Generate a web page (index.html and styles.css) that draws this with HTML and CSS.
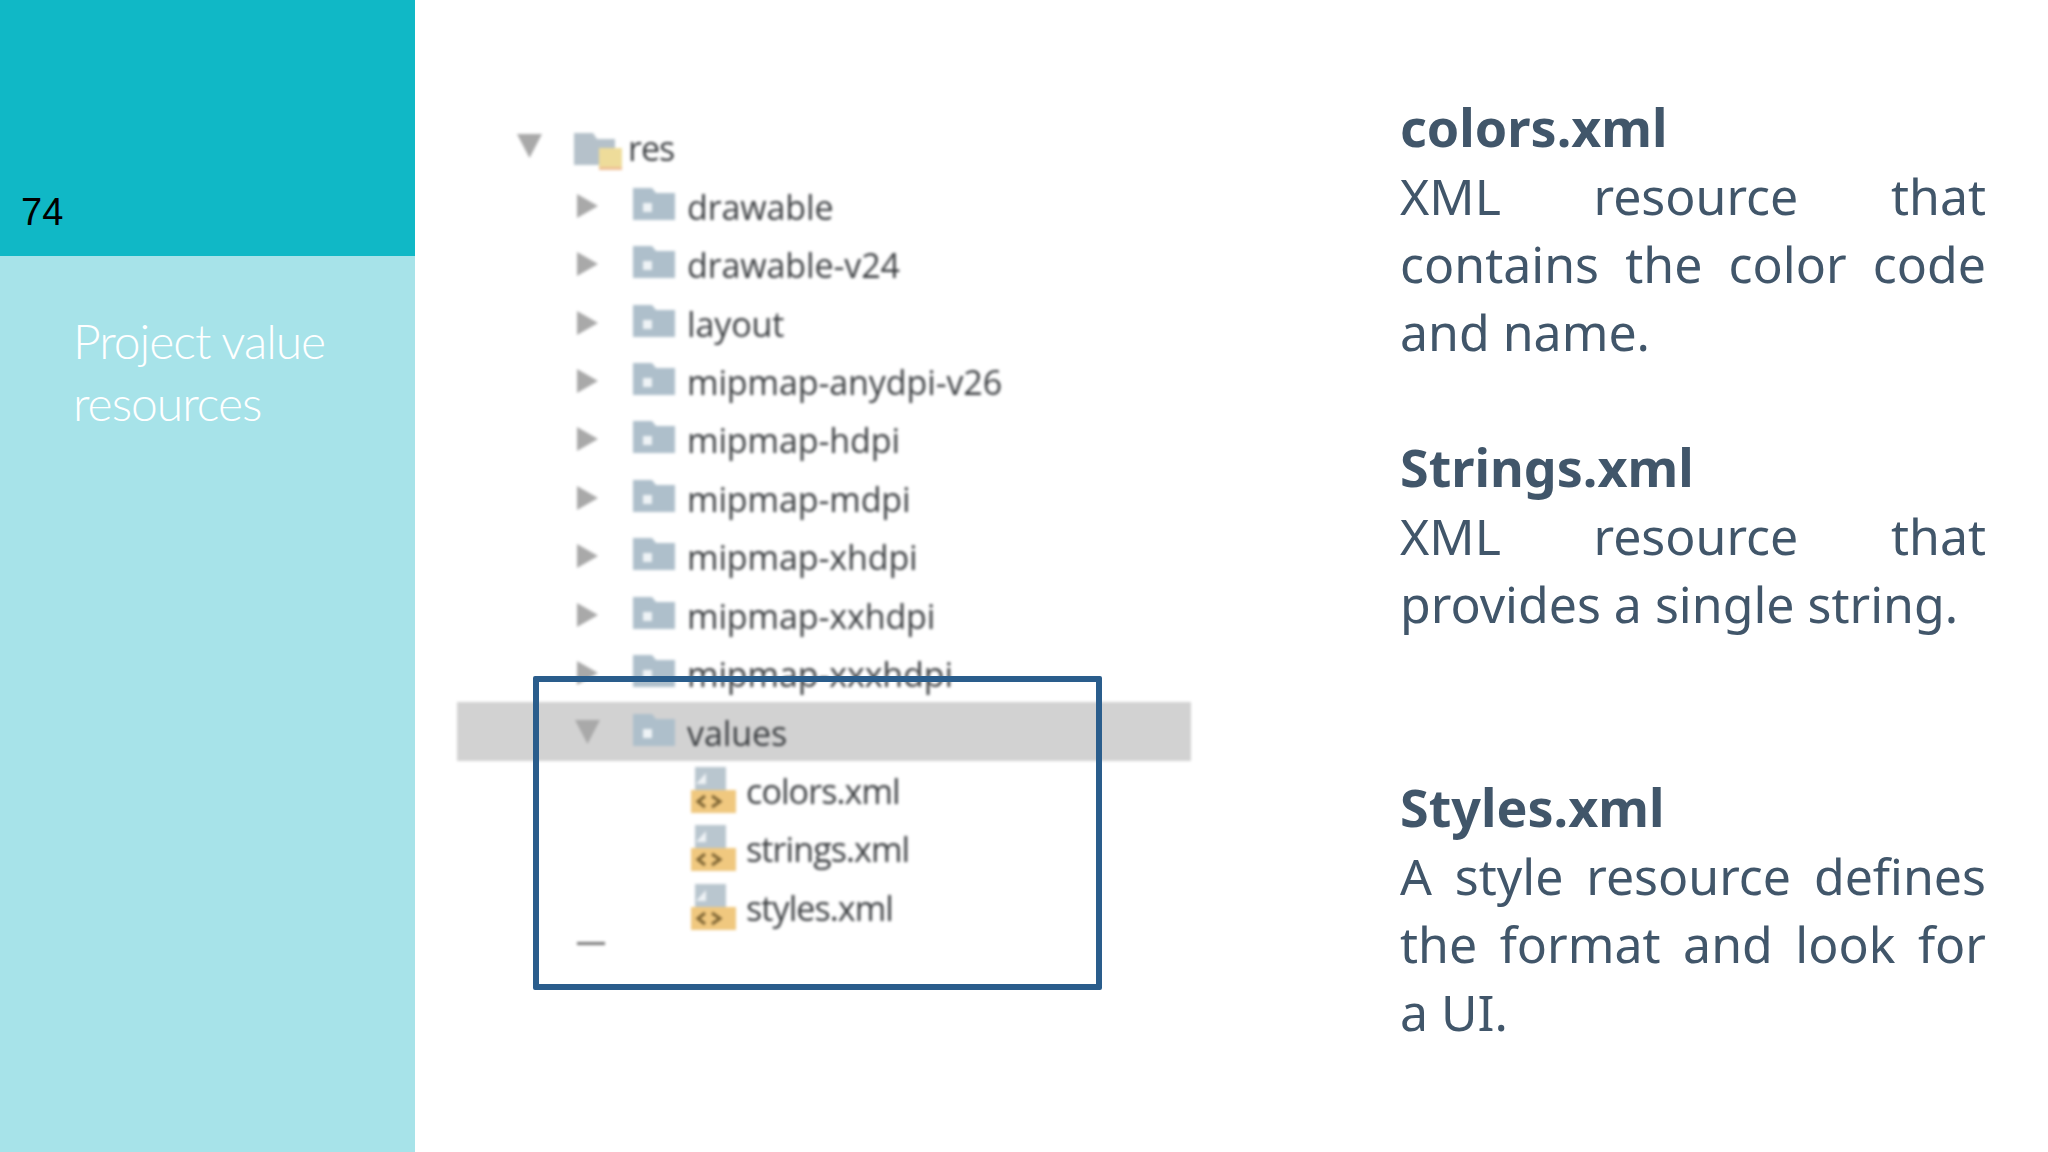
FILE: index.html
```html
<!DOCTYPE html>
<html lang="en">
<head>
<meta charset="utf-8">
<title>Project value resources</title>
<link rel="stylesheet" href="styles.css">
</head>
<body>
<svg class="defs" width="0" height="0" aria-hidden="true">
  <symbol id="right" viewBox="0 0 21 24"><path d="M0 0L21 12L0 24Z" fill="#a9a9a9"/></symbol>
  <symbol id="down" viewBox="0 0 25 24"><path d="M0 0H25L12.500 24Z" fill="#a9a9a9"/></symbol>
  <symbol id="folder" viewBox="0 0 42 32"><path d="M0 0H19L23 5H42V32H0Z" fill="#aebfcb"/><rect x="10" y="15" width="9" height="9" fill="#eef3f6"/></symbol>
  <symbol id="resfolder" viewBox="0 0 48 46"><path d="M0 9H19L23 15H41V41H0Z" fill="#b5c1ca"/><rect x="25" y="24" width="23" height="19" fill="#eedc9a"/><rect x="25" y="43" width="23" height="3" fill="#eebf95"/></symbol>
  <symbol id="xml" viewBox="0 0 45 46"><path d="M4 0H35V23H4Z" fill="#b9c6cf"/><path d="M5 17L15 6V17Z" fill="#eef2f5"/><rect x="0" y="23" width="45" height="23" fill="#f0c87f"/><path d="M14 29L7 34.500L14 40M21 29L29 34.500L21 40" fill="none" stroke="#7d6433" stroke-width="3"/></symbol>
</svg>
<main class="slide">
  <aside class="sidebar">
    <div class="band"><span class="page-no">74</span></div>
    <h1 class="title">Project value resources</h1>
  </aside>
  <section class="stage">
    <ul class="tree">
      <li class="row level0"><svg class="arrow down"><use href="#down"/></svg><svg class="icon res"><use href="#resfolder"/></svg><span>res</span></li>
      <li class="row level1"><svg class="arrow"><use href="#right"/></svg><svg class="icon"><use href="#folder"/></svg><span>drawable</span></li>
      <li class="row level1"><svg class="arrow"><use href="#right"/></svg><svg class="icon"><use href="#folder"/></svg><span>drawable-v24</span></li>
      <li class="row level1"><svg class="arrow"><use href="#right"/></svg><svg class="icon"><use href="#folder"/></svg><span>layout</span></li>
      <li class="row level1"><svg class="arrow"><use href="#right"/></svg><svg class="icon"><use href="#folder"/></svg><span>mipmap-anydpi-v26</span></li>
      <li class="row level1"><svg class="arrow"><use href="#right"/></svg><svg class="icon"><use href="#folder"/></svg><span>mipmap-hdpi</span></li>
      <li class="row level1"><svg class="arrow"><use href="#right"/></svg><svg class="icon"><use href="#folder"/></svg><span>mipmap-mdpi</span></li>
      <li class="row level1"><svg class="arrow"><use href="#right"/></svg><svg class="icon"><use href="#folder"/></svg><span>mipmap-xhdpi</span></li>
      <li class="row level1"><svg class="arrow"><use href="#right"/></svg><svg class="icon"><use href="#folder"/></svg><span>mipmap-xxhdpi</span></li>
      <li class="row level1"><svg class="arrow"><use href="#right"/></svg><svg class="icon"><use href="#folder"/></svg><span>mipmap-xxxhdpi</span></li>
      <li class="row level1 selected"><svg class="arrow down"><use href="#down"/></svg><svg class="icon"><use href="#folder"/></svg><span>values</span></li>
      <li class="row level2"><svg class="arrow"></svg><svg class="icon xml"><use href="#xml"/></svg><span>colors.xml</span></li>
      <li class="row level2"><svg class="arrow"></svg><svg class="icon xml"><use href="#xml"/></svg><span>strings.xml</span></li>
      <li class="row level2"><svg class="arrow"></svg><svg class="icon xml"><use href="#xml"/></svg><span>styles.xml</span></li>
      <li class="row level1"><i class="dash"></i></li>
    </ul>
    <div class="callout"></div>
  </section>
  <section class="notes">
    <article class="note">
      <h2>colors.xml</h2>
      <p>XML resource that contains the color code and name.</p>
    </article>
    <article class="note">
      <h2>Strings.xml</h2>
      <p>XML resource that provides a single string.</p>
    </article>
    <article class="note">
      <h2>Styles.xml</h2>
      <p>A style resource defines the format and look for a UI.</p>
    </article>
  </section>
</main>
</body>
</html>
```
FILE: styles.css
```css
* { box-sizing: border-box; margin: 0; padding: 0; }
html, body { width: 2048px; height: 1152px; overflow: hidden; background: #fff; }
.defs { position: absolute; }
.slide { display: flex; width: 2048px; height: 1152px; }

.sidebar { flex: 0 0 415px; background: #a7e3e9; }
.band { display: flex; align-items: flex-end; height: 256px; padding: 0 0 20px 21px; background: #10b8c6; }
.page-no { font: 38px/48px "Liberation Sans", Arial, sans-serif; color: #000; }
.title { padding: 54px 60px 0 73px; font: 300 48px/62px Lato, "Noto Sans", sans-serif; letter-spacing: -1px; color: #fff; }

.stage { position: relative; flex: 0 0 985px; }
.tree { list-style: none; width: 734px; margin-left: 42px; padding-top: 118px; filter: blur(1.4px); font: 34px/58px "Open Sans", "Noto Sans", sans-serif; color: #3a3d40; }
.row { display: flex; align-items: center; height: 58.45px; letter-spacing: -0.1px; }
.row span { position: relative; top: 1px; }
.level0 { padding-left: 60px; letter-spacing: -1px; }
.level1 { padding-left: 118px; }
.level2 { padding-left: 176px; letter-spacing: -0.9px; }
.selected { background: #d2d2d2; }
.arrow { flex: 0 0 auto; width: 21px; height: 24px; margin: 0 35px 0 2px; }
.arrow.down { width: 25px; margin: 0 33px 0 0; }
.level0 .arrow { position: relative; top: -1px; }
.icon { flex: 0 0 auto; width: 42px; height: 32px; margin: -4px 12px 0 0; }
.icon.res { width: 48px; height: 46px; margin: 0 6px 0 -1px; }
.icon.xml { width: 45px; height: 46px; margin: 0 10px 0 0; }
.dash { display: block; align-self: flex-start; width: 28px; height: 3px; margin: 6px 0 0 2px; background: #777; }

.callout { position: absolute; left: 118px; top: 676px; width: 569px; height: 314px; border: 6px solid #2a5d8c; border-radius: 2px; }

.notes { flex: 0 0 586px; display: grid; grid-auto-rows: 340px; padding-top: 93px; font: 50px/68px "Noto Sans", sans-serif; color: #41566a; }
.note h2 { font-size: 52px; font-weight: 700; line-height: 68px; }
.note p { padding-top: 1px; text-align: justify; }
```
